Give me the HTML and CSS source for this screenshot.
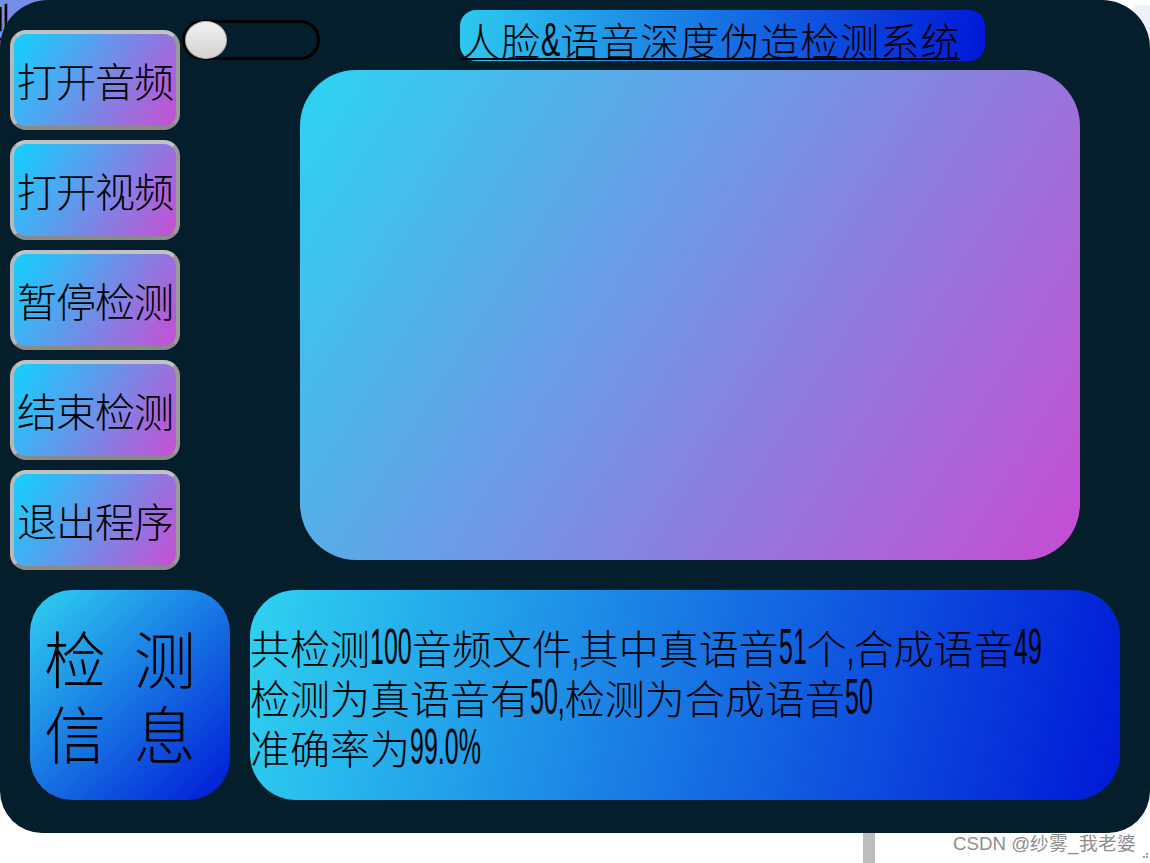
FILE: index.html
```html
<!DOCTYPE html>
<html lang="zh-CN">
<head>
<meta charset="utf-8">
<title>人脸&amp;语音深度伪造检测系统</title>
<link rel="stylesheet" href="styles.css">
</head>
<body>
<div class="stage">
  <div class="peek-left"><span class="peek-glyph">测</span></div>
  <div class="peek-right"></div>
  <div class="window">
    <div class="top">
      <div class="sidebar">
        <div class="btn">打开音频</div>
        <div class="btn">打开视频</div>
        <div class="btn">暂停检测</div>
        <div class="btn">结束检测</div>
        <div class="btn">退出程序</div>
      </div>
      <div class="content">
        <div class="header">
          <div class="toggle"><div class="knob"></div></div>
          <div class="title"><span class="title-text">人脸<span class="num amp">&amp;</span>语音深度伪造检测系统</span></div>
        </div>
        <div class="panel"></div>
      </div>
    </div>
    <div class="bottom">
      <div class="info-label">检 测<br>信 息</div>
      <div class="result">
        <div class="result-text">
          <div>共检测<span class="num d3">100</span>音频文件<span class="num comma">,</span>其中真语音<span class="num d2">51</span>个<span class="num comma">,</span>合成语音<span class="num d2">49</span></div>
          <div>检测为真语音有<span class="num d2c">50,</span>检测为合成语音<span class="num d2">50</span></div>
          <div>准确率为<span class="num pct">99.0%</span></div>
        </div>
      </div>
    </div>
  </div>
  <div class="footer">
    <div class="scroll-stub"></div>
    <div class="watermark">CSDN @纱雾_我老婆</div>
    <div class="grip">
      <span></span><span></span><span></span>
    </div>
  </div>
</div>
</body>
</html>
```

FILE: styles.css
```css
html, body {
  margin: 0;
  padding: 0;
  background: #ffffff;
}

.stage {
  position: relative;
  width: 1150px;
  height: 863px;
  overflow: hidden;
  background: #ffffff;
  font-family: "Noto Sans CJK SC", "Liberation Sans", sans-serif;
}

.peek-left {
  position: absolute;
  left: 0;
  top: 0;
  width: 70px;
  height: 70px;
  background: linear-gradient(135deg, #6f90ea 0%, #8f80e0 100%);
  overflow: hidden;
}

.peek-glyph {
  position: absolute;
  left: -30px;
  top: 0;
  font-size: 40px;
  line-height: 40px;
  color: #000;
}

.peek-right {
  position: absolute;
  right: 0;
  top: 5px;
  width: 16px;
  height: 55px;
  background: #eef2f8;
}

.window {
  position: relative;
  width: 1150px;
  height: 833px;
  background: #041e2c;
  border-radius: 48px 48px 42px 42px;
  display: flex;
  flex-direction: column;
}

.top {
  display: flex;
  height: 570px;
}

.sidebar {
  margin-left: 10px;
  margin-top: 30px;
  width: 170px;
  display: flex;
  flex-direction: column;
  gap: 10px;
}

.btn {
  box-sizing: border-box;
  width: 170px;
  height: 100px;
  border: 4px solid;
  border-color: #c2c2c2 #9a9a9a #8a8a8a #b8b8b8;
  border-radius: 16px;
  background: linear-gradient(120deg, #10d2ff 0%, #c84ed2 100%);
  display: flex;
  align-items: center;
  justify-content: center;
  font-size: 40px;
  font-weight: 300;
  color: #000;
  white-space: nowrap;
  letter-spacing: -1px;
}

.content {
  display: flex;
  flex-direction: column;
  padding-top: 10px;
}

.header {
  display: flex;
  height: 51px;
}

.toggle {
  box-sizing: border-box;
  margin-left: 2px;
  margin-top: 10px;
  width: 138px;
  height: 40px;
  border: 3px solid #000;
  border-radius: 20px;
  padding: 0;
  display: flex;
  align-items: center;
}

.knob {
  box-sizing: border-box;
  width: 42px;
  height: 38px;
  border-radius: 50%;
  background: linear-gradient(180deg, #f2f2f2 0%, #d2d2d2 100%);
  border: 1px solid #b8b8b8;
}

.title {
  box-sizing: border-box;
  margin-left: 140px;
  width: 525px;
  height: 51px;
  border-radius: 16px;
  background: linear-gradient(96deg, #2ccaee 0%, #0018d8 100%);
  padding-left: 1px;
  display: flex;
  align-items: center;
}

.title-text {
  font-size: 39px;
  line-height: 44px;
  font-weight: 300;
  color: #000;
  text-decoration: underline;
  text-decoration-thickness: 2px;
  text-underline-offset: 2px;
  white-space: nowrap;
  letter-spacing: 1px;
  margin-top: 6px;
}

.panel {
  margin-left: 120px;
  margin-top: 9px;
  width: 780px;
  height: 490px;
  border-radius: 56px;
  background: linear-gradient(122deg, #2ad4f2 0%, #c64cd2 100%);
}

.bottom {
  display: flex;
  gap: 20px;
  margin-top: 20px;
  padding-left: 30px;
}

.info-label {
  box-sizing: border-box;
  width: 200px;
  height: 210px;
  border-radius: 42px;
  background: linear-gradient(136deg, #2fd2f0 0%, #0018d6 100%);
  padding-left: 14px;
  padding-top: 30px;
  font-size: 62px;
  line-height: 75px;
  font-weight: 300;
  color: #000;
  word-spacing: 14px;
  white-space: nowrap;
}

.result {
  box-sizing: border-box;
  width: 870px;
  height: 210px;
  border-radius: 46px;
  background: linear-gradient(104deg, #2fd2f0 0%, #0018d6 100%);
  display: flex;
  align-items: center;
}

.result-text {
  font-size: 40px;
  line-height: 50px;
  font-weight: 300;
  color: #000;
  white-space: nowrap;
  padding-top: 4px;
}

/* narrow, tall numerals (condensed display face) */
.num {
  display: inline-block;
  font-family: "Liberation Sans", Arial, sans-serif;
  font-size: 50px;
  line-height: 40px;
  font-weight: 400;
  letter-spacing: 0;
  transform: scaleX(0.5);
  transform-origin: left center;
}

.num.d3 { margin-right: -0.834em; }
.num.d2 { margin-right: -0.556em; }
.num.comma { margin-right: -0.139em; }
.num.d2c { margin-right: -0.695em; }
.num.pct { margin-right: -1.4175em; }
.num.amp {
  font-size: 48px;
  transform: scaleX(0.6);
  margin-right: -0.2668em;
  text-decoration: underline;
  text-decoration-thickness: 2px;
}

.footer {
  position: relative;
  height: 30px;
  display: flex;
}

.scroll-stub {
  margin-left: 863px;
  width: 12px;
  height: 30px;
  background: #bdbdbd;
}

.watermark {
  margin-left: 78px;
  margin-top: 1px;
  font-family: "Liberation Sans", Arial, sans-serif;
  font-size: 18.7px;
  line-height: 20px;
  color: #8e8e8e;
  text-shadow: 0 0 2px #ffffff;
  white-space: nowrap;
}

.grip {
  position: absolute;
  right: 2px;
  bottom: 5px;
  width: 10px;
  height: 10px;
}

.grip span {
  position: absolute;
  width: 2px;
  height: 2px;
  background: #9a9a9a;
}

.grip span:nth-child(1) { right: 0; bottom: 0; }
.grip span:nth-child(2) { right: 3px; bottom: 0; }
.grip span:nth-child(3) { right: 0; bottom: 3px; }
```
